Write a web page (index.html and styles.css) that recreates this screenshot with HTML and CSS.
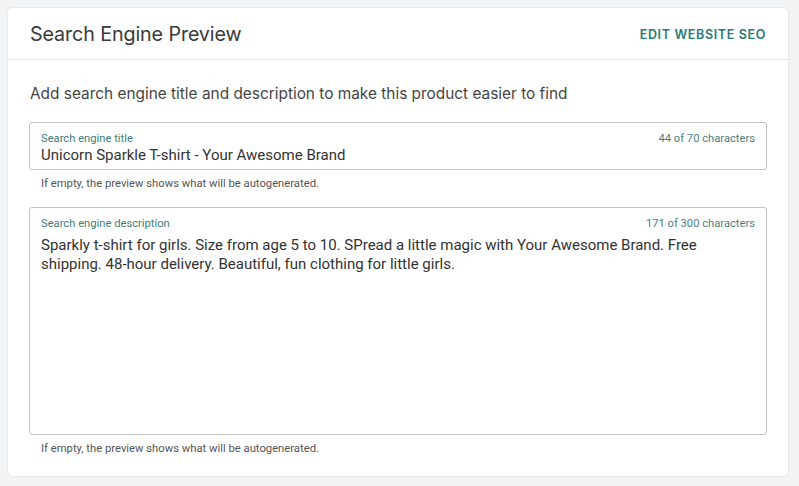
FILE: index.html
```html
<!DOCTYPE html>
<html>
<head>
<meta charset="utf-8">
<link rel="stylesheet" href="styles.css">
</head>
<body>
<div class="card">
  <div class="card-header">
    <h2 class="card-title">Search Engine Preview</h2>
    <a class="header-link">EDIT WEBSITE SEO</a>
  </div>
  <div class="card-body">
    <p class="intro">Add search engine title and description to make this product easier to find</p>
    <div class="field">
      <div class="box box-title">
        <div class="box-top">
          <span class="label">Search engine title</span>
          <span class="counter">44 of 70 characters</span>
        </div>
        <div class="value">Unicorn Sparkle T-shirt - Your Awesome Brand</div>
      </div>
      <div class="helper">If empty, the preview shows what will be autogenerated.</div>
    </div>
    <div class="field">
      <div class="box box-desc">
        <div class="box-top">
          <span class="label">Search engine description</span>
          <span class="counter">171 of 300 characters</span>
        </div>
        <div class="value multi">Sparkly t-shirt for girls. Size from age 5 to 10. SPread a little magic with Your Awesome Brand. Free shipping. 48-hour delivery. Beautiful, fun clothing for little girls.</div>
      </div>
      <div class="helper">If empty, the preview shows what will be autogenerated.</div>
    </div>
  </div>
</div>
</body>
</html>
```
FILE: styles.css
```css
html, body {
  margin: 0;
  padding: 0;
}
body {
  background: #f1f3f4;
  padding: 7px 10px 10px 7px;
  font-family: Roboto, "Liberation Sans", sans-serif;
  box-sizing: border-box;
  width: 799px;
  height: 486px;
}
.card {
  background: #fff;
  border: 1px solid #e6e8e9;
  border-radius: 6px;
  width: 782px;
  height: 470px;
  box-sizing: border-box;
  display: flex;
  flex-direction: column;
}
.card-header {
  height: 52px;
  box-sizing: border-box;
  border-bottom: 1px solid #e4e6e7;
  display: flex;
  align-items: center;
  justify-content: space-between;
  padding: 0 22px 0 22px;
}
.card-title {
  margin: 0;
  font-family: Inter, "Noto Sans", sans-serif;
  font-weight: 400;
  font-size: 19.7px;
  color: #3a3a3a;
  letter-spacing: -0.1px;
  padding-top: 1px;
}
.header-link {
  font-family: Inter, "Noto Sans", sans-serif;
  font-weight: 600;
  font-size: 12.5px;
  letter-spacing: 0.65px;
  color: #277b78;
  padding-top: 1px;
}
.card-body {
  padding: 23px 21px 0 21px;
  display: flex;
  flex-direction: column;
}
.intro {
  margin: 0 0 17px 1px;
  font-family: Inter, "Noto Sans", sans-serif;
  font-size: 15.4px;
  color: #454545;
  line-height: 22px;
}
.field {
  display: flex;
  flex-direction: column;
  margin-bottom: 16px;
}
.box {
  border: 1px solid #c2c2c2;
  border-radius: 3px;
  padding: 8px 11px 0 11px;
  box-sizing: border-box;
}
.box-title {
  height: 48px;
}
.box-desc {
  height: 228px;
}
.box-top {
  display: flex;
  justify-content: space-between;
  align-items: center;
  height: 14px;
}
.label {
  font-size: 11.2px;
  color: #3f7d7b;
}
.counter {
  font-size: 11.2px;
  color: #4b7f7e;
}
.value {
  font-size: 15px;
  color: #333;
  line-height: 19px;
  margin-top: 1px;
}
.value.multi {
  margin-top: 6px;
  padding-right: 30px;
}
.helper {
  font-size: 11.25px;
  color: #555;
  padding: 7px 0 0 12px;
  line-height: 14px;
}
```
